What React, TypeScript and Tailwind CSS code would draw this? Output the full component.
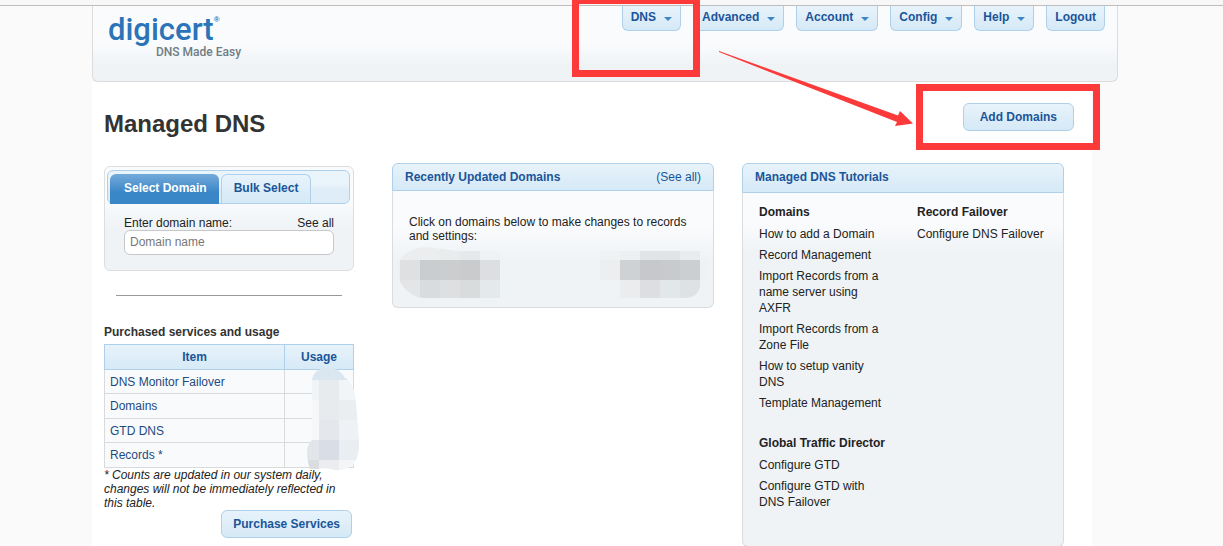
import React from "react";

const navItems = [
  { label: "DNS", menu: true },
  { label: "Advanced", menu: true },
  { label: "Account", menu: true },
  { label: "Config", menu: true },
  { label: "Help", menu: true },
  { label: "Logout", menu: false },
];

const services = ["DNS Monitor Failover", "Domains", "GTD DNS", "Records *"];

const domainLinks = [
  "How to add a Domain",
  "Record Management",
  "Import Records from a name server using AXFR",
  "Import Records from a Zone File",
  "How to setup vanity DNS",
  "Template Management",
];

const gtdLinks = ["Configure GTD", "Configure GTD with DNS Failover"];

const buttonClass =
  "rounded-md border border-[#aed0ea] bg-linear-to-b from-[#e8f3fb] to-[#d5e9f6] font-bold text-[#1b5599]";

type Cell = [x: number, y: number, w: number, h: number, fill: string];

function Mosaic({ id, shape, cells, className, viewBox }: { id: string; shape: string; cells: Cell[]; className: string; viewBox: string }) {
  return (
    <svg aria-hidden="true" viewBox={viewBox} className={className} shapeRendering="crispEdges">
      <clipPath id={id}>
        <path d={shape} />
      </clipPath>
      <g clipPath={`url(#${id})`}>
        {cells.map(([x, y, w, h, fill]) => (
          <rect key={`${x}-${y}`} x={x} y={y} width={w} height={h} fill={fill} />
        ))}
      </g>
    </svg>
  );
}

const leftDomain: Cell[] = [
  [0, 0, 23, 13, "#ecedef"], [23, 0, 20, 13, "#ebedee"], [43, 0, 20, 13, "#e9eced"], [63, 4, 20, 9, "#e5e9eb"], [83, 4, 20, 9, "#eef2f4"],
  [0, 13, 3, 36, "#edf0f2"], [3, 13, 20, 20, "#dfe0e2"], [23, 13, 20, 20, "#c9cdcf"], [43, 13, 20, 20, "#cbcdcf"], [63, 13, 20, 20, "#cacbcd"], [83, 13, 20, 20, "#dddee2"],
  [3, 33, 20, 18, "#e3e5e7"], [23, 33, 20, 18, "#d8dcde"], [43, 33, 20, 18, "#dddfe1"], [63, 33, 20, 18, "#d8dcdd"], [83, 33, 20, 18, "#e4e9ec"],
];

const rightDomain: Cell[] = [
  [0, 4, 20, 9, "#eff2f3"], [20, 4, 20, 9, "#edf0f2"], [40, 4, 20, 9, "#e0e4e6"], [60, 4, 20, 9, "#e1e4e6"], [80, 4, 20, 9, "#e8ecee"],
  [0, 13, 20, 20, "#edeef0"], [20, 13, 20, 20, "#ced2d4"], [40, 13, 20, 20, "#c6c8cb"], [60, 13, 20, 20, "#c8cacd"], [80, 13, 20, 20, "#cccfd2"],
  [20, 33, 20, 18, "#eaecee"], [40, 33, 20, 18, "#dcdee1"], [60, 33, 20, 18, "#e2e7e9"], [80, 33, 20, 18, "#dee2e5"], [100, 10, 9, 34, "#eff2f5"],
];

const usageCells: Cell[] = [
  [0, 0, 54, 12, "#dae6f0"], [0, 12, 13, 20, "#f1f4f7"], [13, 12, 20, 20, "#e8ebed"], [33, 12, 21, 20, "#f2f5f7"],
  [6, 32, 7, 40, "#f5f7f9"], [13, 32, 20, 20, "#e8ebee"], [33, 32, 21, 20, "#ebeef1"],
  [13, 52, 20, 20, "#e4e8ec"], [33, 52, 21, 20, "#eff2f5"], [0, 72, 13, 20, "#e2e6eb"], [13, 72, 20, 20, "#d9dee6"], [33, 72, 21, 20, "#eaedf1"],
  [0, 92, 13, 11, "#dbdcdf"], [13, 92, 20, 11, "#ecedf0"], [33, 92, 21, 11, "#f4f5f7"],
];

function Heading({ children }: { children: React.ReactNode }) {
  return <h3 className="font-bold leading-4">{children}</h3>;
}

function LinkList({ items }: { items: string[] }) {
  return (
    <ul className="mt-1.5 flex flex-col gap-[5px] leading-4">
      {items.map((item) => (
        <li key={item}>
          <a href="#tutorial">{item}</a>
        </li>
      ))}
    </ul>
  );
}

export default function App() {
  return (
    <div className="relative h-screen overflow-hidden bg-[#fafafa] font-['Liberation_Sans',Arial,sans-serif] text-xs text-[#222]">
      <div className="h-1.5 border-b border-[#bdbdbd] bg-[#f7f7f7]" />
      <div className="ml-[92px] mr-[105px]">
        <header className="flex h-[76px] items-start justify-between rounded-b-md border border-t-0 border-[#dadcde] bg-linear-to-b from-[#fafbfd] from-50% to-[#eff3f6] to-80% pl-[15px] pr-3">
          <a href="#home" className="flex flex-col pt-1.5">
            <span className="flex h-[34px] items-start">
              <span className="font-['Roboto',sans-serif] text-[31px] font-medium leading-9 text-[#2b74b8]">digicert</span>
              <span className="pt-0.5 text-[8px] font-bold leading-3 text-[#2b74b8]">®</span>
            </span>
            <span className="pl-12 font-['Roboto',sans-serif] text-xs font-medium leading-3 text-[#6f7d85]">DNS Made Easy</span>
          </a>
          <nav className="flex gap-3">
            {navItems.map(({ label, menu }) => (
              <button
                key={label}
                className="flex h-[25px] items-start gap-2 rounded-b-md border border-t-0 border-[#aed0ea] bg-linear-to-b from-[#e8f3fb] to-[#d5e9f6] px-2 pt-[3px] font-bold leading-4 text-[#1b5599]"
              >
                {label}
                {menu && (
                  <svg aria-hidden="true" viewBox="0 0 8 4" className="mt-2 h-1 w-2" fill="#3d85c6">
                    <path d="M0 0h8L4 4z" />
                  </svg>
                )}
              </button>
            ))}
          </nav>
        </header>
      </div>

      <main className="ml-[92px] mr-[131px] bg-white pb-10 pl-3 pr-7">
        <div className="flex items-start justify-between pt-[21px]">
          <h1 className="pt-1.5 text-2xl font-bold leading-[30px] text-[#333]">Managed DNS</h1>
          <button className={`${buttonClass} -mr-2.5 h-7 px-4`}>Add Domains</button>
        </div>

        <div className="flex items-start pt-6">
          <section className="mr-[38px] mt-[3px] w-[250px] shrink-0">
            <div className="rounded-md border border-[#dcdedf] bg-linear-to-b from-[#fafbfd] from-30% to-[#eff3f6] to-60% px-0.5 pb-[15px] pt-[3px]">
              <div className="mr-px flex h-[34px] items-end gap-0.5 rounded-md border border-[#aed0ea] bg-linear-to-b from-[#eaf4fb] from-40% to-[#deedf7] to-60% pl-0.5">
                <button className="-mb-px h-[30px] rounded-t-md bg-linear-to-b from-[#74aada] to-[#3a87c8] to-60% pb-0.5 pl-3.5 pr-3 font-bold text-white">Select Domain</button>
                <button className="h-[29px] rounded-t-md border border-b-0 border-[#aed0ea] bg-linear-to-b from-[#e8f3fb] to-[#d5e9f6] px-3 pb-0.5 font-bold text-[#1b5599]">Bulk Select</button>
              </div>
              <div className="px-[17px] pt-3">
                <div className="flex justify-between leading-[14px]">
                  <label htmlFor="domain">Enter domain name:</label>
                  <a href="#all">See all</a>
                </div>
                <input id="domain" placeholder="Domain name" className="block h-[25px] w-full rounded-md border border-[#c6c8ca] bg-white px-[5px] pb-0.5 placeholder:text-[#777]" />
              </div>
            </div>

            <hr className="mx-3 mt-6 border-[#999]" />

            <h2 className="mt-7 font-bold leading-4 text-[#333]">Purchased services and usage</h2>
            <div className="relative mt-1">
              <table className="w-full border-collapse text-[#1d4a80]">
                <thead>
                  <tr className="h-[25px] bg-linear-to-b from-[#e8f3fb] to-[#d5e9f6] text-[#1b5599]">
                    <th className="border border-[#aed0ea]">Item</th>
                    <th className="w-[69px] border border-[#aed0ea]">Usage</th>
                  </tr>
                </thead>
                <tbody>
                  {services.map((name) => (
                    <tr key={name} className="bg-[#f9fafc] odd:h-6 even:h-[25px]">
                      <td className="border border-[#d8dadc] px-[5px]">{name}</td>
                      <td className="border border-[#d8dadc]" />
                    </tr>
                  ))}
                </tbody>
              </table>
              <Mosaic
                id="usage-mask"
                className="absolute -right-1.5 top-6 h-[103px] w-[54px]"
                viewBox="0 0 54 103"
                shape="M6 12Q8 0 22 0Q34 0 39 10Q48 14 50 34L53 72Q54 88 47 97Q40 103 29 102Q20 99 13 101H4Q-3 80 6 72Z"
                cells={usageCells}
              />
            </div>
            <p className="italic leading-[14px]">* Counts are updated in our system daily, changes will not be immediately reflected in this table.</p>
            <div className="flex justify-end pr-0.5">
              <button className={`${buttonClass} h-7 px-[11px]`}>Purchase Services</button>
            </div>
          </section>

          <section className="mr-7 min-w-0 flex-1">
            <div className="flex h-7 items-center justify-between rounded-t-md border border-[#aed0ea] bg-linear-to-b from-[#e8f3fb] to-[#d5e9f6] px-3 text-[#1b5599]">
              <h2 className="font-bold">Recently Updated Domains</h2>
              <a href="#recent">(See all)</a>
            </div>
            <div className="rounded-b-md border border-t-0 border-[#dadcde] bg-linear-to-b from-[#fafbfd] from-30% to-[#eff3f6] to-60% pb-[9px]">
              <p className="px-4 pt-6 leading-[14px]">Click on domains below to make changes to records and settings:</p>
              <div className="flex justify-between pl-1 pr-1">
                <Mosaic
                  id="first-mask"
                  className="mt-1 h-[51px] w-[103px]"
                  viewBox="0 0 103 51"
                  shape="M4 11Q14 0 29 0L60 4H103V51H28Q12 51 2 33Q-1 20 4 11Z"
                  cells={leftDomain}
                />
                <Mosaic
                  id="second-mask"
                  className="mt-1 h-[51px] w-[109px]"
                  viewBox="0 0 109 51"
                  shape="M0 4H100Q109 10 109 23Q109 32 100 40Q97 51 86 51H0Z"
                  cells={rightDomain}
                />
              </div>
            </div>
          </section>

          <section className="min-w-0 flex-1">
            <div className="flex h-[30px] items-center rounded-t-md border border-[#aed0ea] bg-linear-to-b from-[#e8f3fb] to-[#d5e9f6] px-3 pb-0.5 text-[#1b5599]">
              <h2 className="font-bold">Managed DNS Tutorials</h2>
            </div>
            <div className="flex gap-[30px] rounded-b-md border border-t-0 border-[#dadcde] bg-[#eff3f6] bg-linear-to-b from-[#fafbfd] from-[30px] to-[#eff3f6] to-[60px] px-4 pb-9 pt-[11px]">
              <div className="w-32">
                <Heading>Domains</Heading>
                <LinkList items={domainLinks} />
                <div className="mt-6">
                  <Heading>Global Traffic Director</Heading>
                  <LinkList items={gtdLinks} />
                </div>
              </div>
              <div>
                <Heading>Record Failover</Heading>
                <LinkList items={["Configure DNS Failover"]} />
              </div>
            </div>
          </section>
        </div>
      </main>

      <div className="absolute left-[572px] top-0 h-[77px] w-32 border-[7px] border-t-4 border-[#fc3a39]" />
      <div className="absolute left-[916px] top-[84px] h-[66px] w-[184px] border-[7px] border-[#fc3a39]" />
      <svg aria-hidden="true" viewBox="0 0 196 78" className="absolute left-[718px] top-[50px] h-[78px] w-[196px]" fill="#fc3a39">
        <path d="M1 1L180 65.500L182 61L195 73.500L177 76L179 72L1 2Z" />
      </svg>
    </div>
  );
}
